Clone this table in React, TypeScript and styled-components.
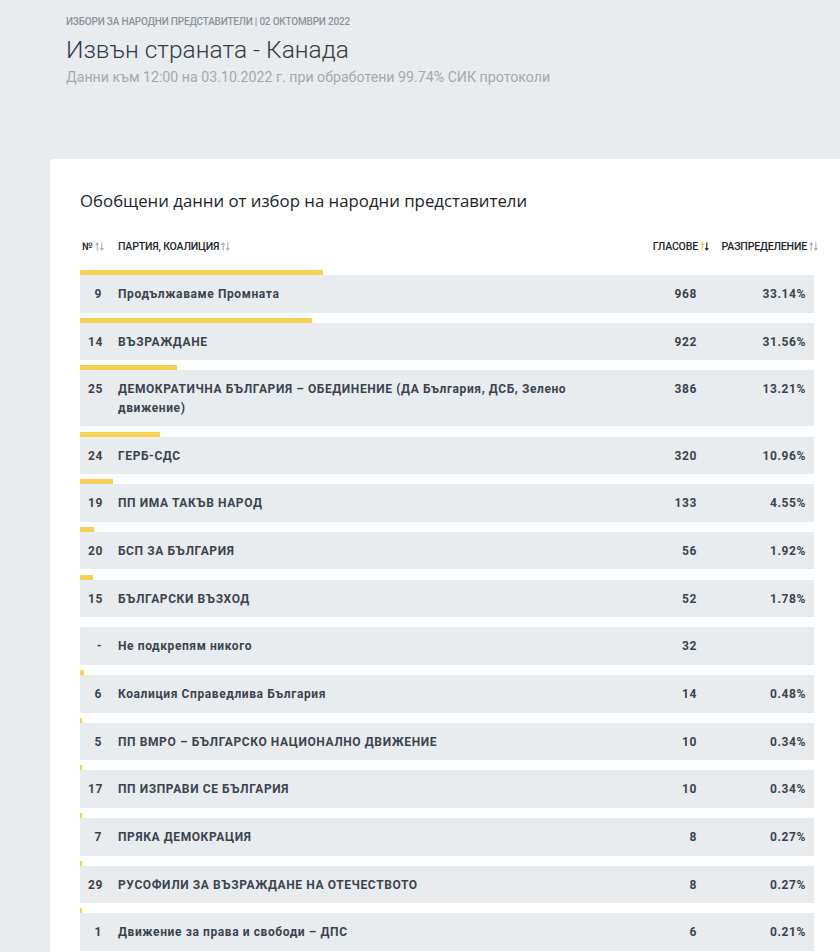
import React from "react";
import styled, { createGlobalStyle } from "styled-components";

const Global = createGlobalStyle`
  html, body { margin: 0; padding: 0; }
  body {
    background: #e9ecef;
    overflow-x: hidden;
    font-family: Roboto, "Noto Sans", sans-serif;
    -webkit-font-smoothing: antialiased;
  }
`;

const Page = styled.div`
  width: 840px;
  min-height: 952px;
  padding-top: 15px;
  box-sizing: border-box;
`;

const Hero = styled.header`
  padding-left: 66px;
  display: flex;
  flex-direction: column;
`;

const Kicker = styled.div`
  font-size: 10px;
  font-weight: 500;
  line-height: 14px;
  color: #8c9299;
  letter-spacing: -0.2px;
  text-transform: uppercase;
`;

const Title = styled.h1`
  margin: 6px 0 0;
  font-size: 24.5px;
  font-weight: 300;
  line-height: 30px;
  color: #343a40;
`;

const Sub = styled.div`
  margin-top: 3px;
  font-size: 14.2px;
  line-height: 18px;
  color: #a3a9ae;
`;

const Card = styled.section`
  margin: 73px 0 0 50px;
  width: 800px;
  background: #fff;
  border-radius: 4px 0 0 0;
  padding: 30px 36px 40px 30px;
  box-sizing: border-box;
`;

const CardTitle = styled.h2`
  margin: 0;
  font-family: "Open Sans", "Noto Sans", sans-serif;
  font-size: 16.8px;
  font-weight: 400;
  line-height: 24px;
  color: #212529;
`;

const cols = `14px 1fr 80px 93px`;

const HeadRow = styled.div`
  margin-top: 25px;
  display: grid;
  grid-template-columns: ${cols};
  column-gap: 16px;
  padding: 0 8px;
  align-items: center;
  height: 16px;
  margin-bottom: 16px;
`;

const Th = styled.div<{ $right?: boolean }>`
  display: flex;
  align-items: center;
  justify-content: ${(p) => (p.$right ? "flex-end" : "flex-start")};
  font-size: 10.6px;
  font-weight: 500;
  letter-spacing: -0.2px;
  color: #23272b;
  text-transform: uppercase;
  white-space: nowrap;
`;

const ThNum = styled(Th)`
  margin-left: -6px;
`;

const ThShift = styled(Th)<{ $shift: number }>`
  margin-right: ${(p) => -p.$shift}px;
`;

const List = styled.div`
  display: flex;
  flex-direction: column;
  gap: 5.2px;
`;

const Item = styled.div`
  display: flex;
  flex-direction: column;
`;

const Bar = styled.div`
  height: 5px;
  background: #f7d154;
`;

const Row = styled.div`
  display: grid;
  grid-template-columns: ${cols};
  column-gap: 16px;
  padding: 10px 8px 9px;
  background: #e9ecef;
  font-size: 12px;
  font-weight: 700;
  line-height: 18.5px;
  letter-spacing: 0.6px;
  color: #3b444d;
`;

const Num = styled.div`
  text-align: right;
  white-space: nowrap;
`;

const Name = styled.div`
  max-width: 460px;
`;

const Cell = styled.div`
  text-align: right;
`;

const SortSvg = styled.svg`
  margin-left: 2px;
  flex: none;
`;

function Sort({ active }: { active?: boolean }) {
  const up = active ? "#f2c12e" : "#a9aeb3";
  const down = active ? "#23272b" : "#a9aeb3";
  return (
    <SortSvg width="9" height="9" viewBox="0 0 9 9">
      <path d="M2.2 8.5V1.2M0.6 2.8L2.2 1L3.8 2.8" stroke={up} strokeWidth="1.1" fill="none" />
      <path d="M6.8 0.5V7.8M5.2 6.2L6.8 8L8.4 6.2" stroke={down} strokeWidth="1.1" fill="none" />
    </SortSvg>
  );
}

type Party = { n: string; name: string; votes: string; pct?: number };

const data: Party[] = [
  { n: "9", name: "Продължаваме Промната", votes: "968", pct: 33.14 },
  { n: "14", name: "ВЪЗРАЖДАНЕ", votes: "922", pct: 31.56 },
  { n: "25", name: "ДЕМОКРАТИЧНА БЪЛГАРИЯ – ОБЕДИНЕНИЕ (ДА България, ДСБ, Зелено движение)", votes: "386", pct: 13.21 },
  { n: "24", name: "ГЕРБ-СДС", votes: "320", pct: 10.96 },
  { n: "19", name: "ПП ИМА ТАКЪВ НАРОД", votes: "133", pct: 4.55 },
  { n: "20", name: "БСП ЗА БЪЛГАРИЯ", votes: "56", pct: 1.92 },
  { n: "15", name: "БЪЛГАРСКИ ВЪЗХОД", votes: "52", pct: 1.78 },
  { n: "-", name: "Не подкрепям никого", votes: "32" },
  { n: "6", name: "Коалиция Справедлива България", votes: "14", pct: 0.48 },
  { n: "5", name: "ПП ВМРО – БЪЛГАРСКО НАЦИОНАЛНО ДВИЖЕНИЕ", votes: "10", pct: 0.34 },
  { n: "17", name: "ПП ИЗПРАВИ СЕ БЪЛГАРИЯ", votes: "10", pct: 0.34 },
  { n: "7", name: "ПРЯКА ДЕМОКРАЦИЯ", votes: "8", pct: 0.27 },
  { n: "29", name: "РУСОФИЛИ ЗА ВЪЗРАЖДАНЕ НА ОТЕЧЕСТВОТО", votes: "8", pct: 0.27 },
  { n: "1", name: "Движение за права и свободи – ДПС", votes: "6", pct: 0.21 },
];

export default function App() {
  return (
    <Page>
      <Global />
      <Hero>
        <Kicker>Избори за народни представители | 02 октомври 2022</Kicker>
        <Title>Извън страната - Канада</Title>
        <Sub>Данни към 12:00 на 03.10.2022 г. при обработени 99.74% СИК протоколи</Sub>
      </Hero>
      <Card>
        <CardTitle>Обобщени данни от избор на народни представители</CardTitle>
        <HeadRow>
          <ThNum>
            №<Sort />
          </ThNum>
          <Th>
            Партия, коалиция<Sort />
          </Th>
          <ThShift $right $shift={12}>
            Гласове<Sort active />
          </ThShift>
          <ThShift $right $shift={12}>
            Разпределение<Sort />
          </ThShift>
        </HeadRow>
        <List>
          {data.map((p) => (
            <Item key={p.n + p.name}>
              <Bar style={{ width: p.pct ? `${Math.max(p.pct, 0.3)}%` : 0 }} />
              <Row>
                <Num>{p.n}</Num>
                <Name>{p.name}</Name>
                <Cell>{p.votes}</Cell>
                <Cell>{p.pct !== undefined ? `${p.pct.toFixed(2)}%` : ""}</Cell>
              </Row>
            </Item>
          ))}
        </List>
      </Card>
    </Page>
  );
}
